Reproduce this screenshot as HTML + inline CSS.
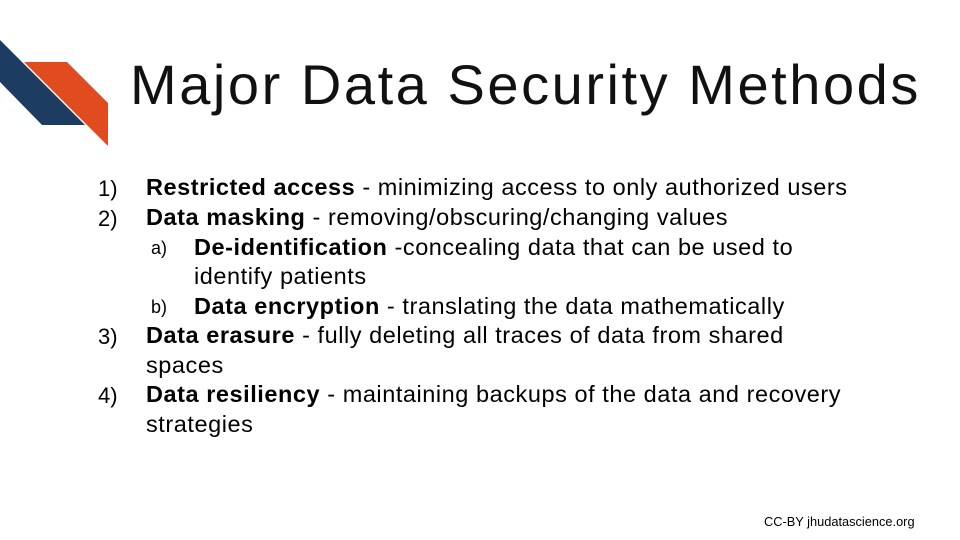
<!DOCTYPE html>
<html><head><style>
body{margin:0;width:960px;height:540px;background:#fff;position:relative;overflow:hidden;font-family:"Liberation Sans",sans-serif;color:#000}
.t{position:absolute;left:130px;top:52px;font-size:56px;white-space:nowrap;letter-spacing:2.55px;color:#111}
.l{position:absolute;font-size:23.5px;letter-spacing:0.55px;white-space:nowrap}
.n{position:absolute;font-size:22px}
.s{position:absolute;font-size:18px}
b{font-weight:bold}
.f{position:absolute;left:764px;top:514px;font-size:12.8px}
</style></head><body>
<svg width="120" height="160" style="position:absolute;left:0;top:0">
<polygon points="0,40 85,125 42,125 0,82" fill="#1c3c61"/>
<polygon points="24,62 67,62 108,103 108,146" fill="#e04b1f"/>
</svg>
<div class="t">Major Data Security Methods</div>
<div class="n" style="left:98px;top:176px">1)</div>
<div class="l" style="left:146px;top:174px"><b>Restricted access</b> - minimizing access to only authorized users</div>
<div class="n" style="left:98px;top:206px">2)</div>
<div class="l" style="left:146px;top:204px"><b>Data masking</b> - removing/obscuring/changing values</div>
<div class="s" style="left:151px;top:238px">a)</div>
<div class="l" style="left:194px;top:234px"><b>De-identification</b> -concealing data that can be used to</div>
<div class="l" style="left:194px;top:263px">identify patients</div>
<div class="s" style="left:151px;top:297px">b)</div>
<div class="l" style="left:194px;top:293px"><b>Data encryption</b> - translating the data mathematically</div>
<div class="n" style="left:98px;top:324px">3)</div>
<div class="l" style="left:146px;top:322px"><b>Data erasure</b> - fully deleting all traces of data from shared</div>
<div class="l" style="left:146px;top:352px">spaces</div>
<div class="n" style="left:98px;top:383px">4)</div>
<div class="l" style="left:146px;top:381px"><b>Data resiliency</b> - maintaining backups of the data and recovery</div>
<div class="l" style="left:146px;top:411px">strategies</div>
<div class="f">CC-BY jhudatascience.org</div>
</body></html>
